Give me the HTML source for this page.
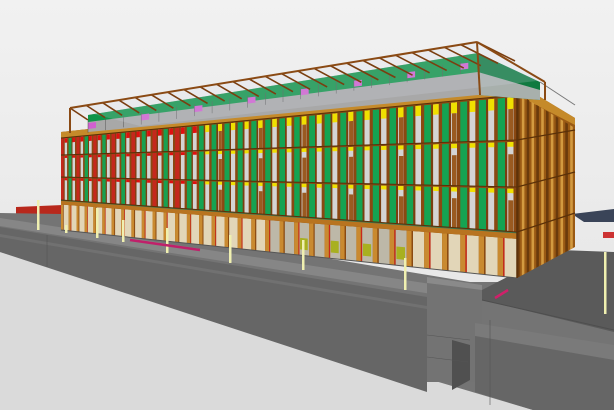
<!DOCTYPE html>
<html><head><meta charset="utf-8"><style>
html,body{margin:0;padding:0;background:#ececec;width:614px;height:410px;overflow:hidden}
svg{display:block}
</style></head><body>
<svg id="s" width="614" height="410" viewBox="0 0 614 410" xmlns="http://www.w3.org/2000/svg">
<defs><linearGradient id="bg" x1="0" y1="0" x2="0" y2="1"><stop offset="0" stop-color="#f1f1f1"/><stop offset="1" stop-color="#e4e4e4"/></linearGradient></defs>
<rect width="614" height="410" fill="url(#bg)"/>
<polygon points="0,252 533,410 0,410" fill="#dadada"/>
<polygon points="16,207 63,205 63,216 16,216" fill="#b8281c"/>
<polygon points="0,213 61,214 470,282 520,282 614,252 614,410 533,410 0,252" fill="#747474"/>
<polygon points="0,218 470,290 470,300 0,226" fill="#868686"/>
<polygon points="0,227 427,297 427,392 0,252" fill="#666"/>
<polygon points="0,234 427,306 427,309 0,237" fill="#717171"/>
<line x1="47" y1="235" x2="47" y2="267" stroke="#555" stroke-width="0.6"/>
<polygon points="427,277 482,285 482,382 427,382" fill="#737373"/>
<polygon points="427,277 482,285 482,290 427,283" fill="#8a8a8a"/>
<polygon points="452,340 470,345 470,380 452,390" fill="#505050"/>
<line x1="427" y1="335" x2="470" y2="340" stroke="#555" stroke-width="0.6"/>
<line x1="427" y1="357" x2="468" y2="362" stroke="#555" stroke-width="0.6"/>
<polygon points="482,290 560,250 614,252 614,332 482,300" fill="#5a5a5a"/>
<polygon points="475,323 614,345 614,360 475,336" fill="#7a7a7a"/>
<polygon points="475,336 614,360 614,410 533,410 475,392" fill="#666"/>
<line x1="490" y1="320" x2="490" y2="405" stroke="#555" stroke-width="0.6"/>
<line x1="482" y1="300" x2="614" y2="330" stroke="#4e4e4e" stroke-width="1"/>
<polygon points="572,214 614,209 614,222 584,222" fill="#3a4458"/>
<rect x="603" y="232" width="11" height="6" fill="#c33"/>
<g id="bld"></g>
</svg>
<script>
var g=document.getElementById('bld');
var out='';
function P(pts,f){out+='<polygon points="'+pts.map(function(p){return p[0].toFixed(1)+','+p[1].toFixed(1)}).join(' ')+'" fill="'+f+'"/>';}
function L(x1,y1,x2,y2,c,w){out+='<line x1="'+x1+'" y1="'+y1+'" x2="'+x2+'" y2="'+y2+'" stroke="'+c+'" stroke-width="'+w+'"/>';}
var X0=61,X1=517;
var LY=[132,138,155,177,200,230], RY=[83,95,140,187,232,278];
function xu(u){return X0+(X1-X0)*(u*(0.55+0.45*u));}
function yl(k,u){var t=(xu(u)-X0)/(X1-X0);return LY[k]+(RY[k]-LY[k])*t;}
function quad(u0,u1,k0,k1,f,f0,f1){
 f0=f0||0;f1=(f1===undefined)?1:f1;
 var a0=yl(k0,u0),b0=yl(k1,u0),a1=yl(k0,u1),b1=yl(k1,u1);
 P([[xu(u0),a0+(b0-a0)*f0],[xu(u1),a1+(b1-a1)*f0],[xu(u1),a1+(b1-a1)*f1],[xu(u0),a0+(b0-a0)*f1]],f);}
quad(0,1,0,5,'#8a4a12');
var N=34;
for(var i=0;i<N;i++){
 var u0=i/N,u1=(i+1)/N,d=u1-u0;
 var left=i<14;
 for(var k=1;k<4;k++){
  quad(u0,u0+d*0.38,k,k+1, left?(i%2?'#18a050':'#c4281c'):'#15a352',0.04,1);
  quad(u0+d*0.38,u0+d*0.5,k,k+1,'#7a3e10',0.04,1);
  quad(u0+d*0.5,u0+d*0.82,k,k+1,'#d4d4d4',0.04,1);
  quad(u0+d*0.5,u0+d*0.82,k,k+1,left?'#e01010':'#f0e000',0.04,(k==1)?0.3:0.14);
  quad(u0+d*0.82,u0+d,k,k+1,'#8a4812',0.04,1);
  if(!left&&i%3==0)quad(u0+d*0.55,u0+d*0.8,k,k+1,'#9a5a20',0.3,1);
 }
 quad(u0,u0+d*0.28,4,5,'#c98a30',0.15,1);
 quad(u0+d*0.28,u0+d*0.36,4,5,i%2?'#c8281c':'#8a4a12',0.15,1);
 quad(u0+d*0.36,u0+d,4,5,(i>18&&i<28)?'#bdb8a8':'#e2d6b8',0.15,1);
 if(i>20&&i<28&&i%2)quad(u0+d*0.4,u0+d*0.9,4,5,'#a8b020',0.55,0.85);
}
quad(0,1,0,1,'#c58a2a');
quad(0,1,4,5,'#b87420',0,0.15);
quad(0,1,4,5,'#3d7a54',0,0.03);
for(var k=1;k<5;k++){L(X0,yl(k,0),X1,yl(k,1),'#5a3008',1);}
L(X0,yl(5,0),X1,yl(5,1),'#555',1);
P([[517,83],[575,118],[575,247],[517,278]],'#9a5a14');
P([[517,83],[575,118],[575,125],[517,95]],'#c58a2a');
for(var j=0;j<12;j++){var t0=j/12,t1=t0+0.045;
 var xa=517+58*t0,xb=517+58*t1;
 var ya=83+35*t0+10,yb=83+35*t1+10,za=278-31*t0,zb=278-31*t1;
 P([[xa,ya],[xb,yb],[xb,zb],[xa,za]],j%2?'#d39a40':'#6a3a0c');}
[[140,130],[187,172],[232,213]].forEach(function(a){L(517,a[0],575,a[1],'#5a3008',1.2);});
L(517,83,517,278,'#5a3008',1.5);
P([[88,115],[478,53],[478,95],[88,132]],'#a8a8a8');
P([[88,115],[478,53],[478,72],[88,122]],'#0f9448');
for(var m=0;m<22;m++){var x=88+390*m/22;var y=115-62*m/22;
 if(m%3==0)P([[x,y+8],[x+8,y+7],[x+8,y+13],[x,y+14]],'#d060d0');
 L(x,y+6,x,y+18,'#555',0.5);}
P([[478,53],[540,82],[540,100],[478,95]],'#107a40');
P([[478,72],[540,90],[540,100],[478,95]],'#a8b0ac');
L(540,82,575,105,'#777',1);
P([[70,108],[477,42],[545,80],[140,126]],'rgba(215,222,235,0.2)');
for(var b=0;b<26;b++){var t=b/25;var x=70+407*t,y=108-66*t;
 L(x,y,x+18+20*t,y+12+7*t,'#7a3e10',1.6);}
L(70,108,477,42,'#8a4a14',2);
L(477,42,545,82,'#8a4a14',2);
L(70,108,70,133,'#8a4a14',2);
L(477,42,480,95,'#8a4a14',2);
L(545,82,545,100,'#8a4a14',2);
[[37,200,30],[65,225,8],[96,208,30],[122,220,22],[166,228,25],[229,235,28],[302,240,30],[404,258,32],[604,252,62]].forEach(function(l){
 out+='<rect x="'+l[0]+'" y="'+l[1]+'" width="2.5" height="'+l[2]+'" fill="#f0f0b0"/>';});
L(130,240,200,250,'#c0206a',2.5);
L(495,298,508,290,'#d0206a',2.5);
g.innerHTML=out;
</script>
</body></html>
